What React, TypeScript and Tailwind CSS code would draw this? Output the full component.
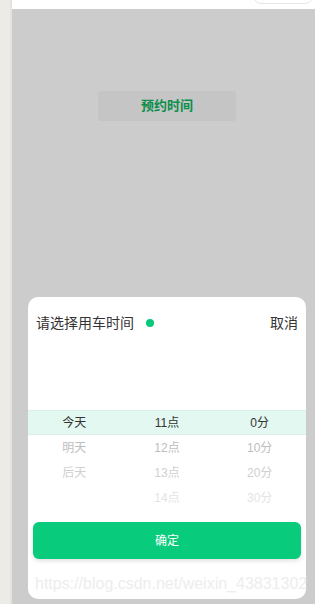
import React from "react";

const cjk = { fontFamily: '"Liberation Sans", "Noto Sans CJK SC", sans-serif' };

const days = ["今天", "明天", "后天", ""];
const hours = ["11点", "12点", "13点", "14点"];
const mins = ["0分", "10分", "20分", "30分"];
const rowColors = ["text-[#333333]", "text-[#bdbdbd]", "text-[#d0d0d0]", "text-[#e4e4e4]"];

export default function App() {
  return (
    <div className="w-[315px] h-[604px] flex overflow-hidden bg-[#cccccc]" style={cjk}>
      <div className="w-[12px] h-full bg-[#ecebe7] border-r-[2px] border-[#e3e2de]" />
      <div className="flex-1 flex flex-col">
        <div className="h-[9px] bg-white relative">
          <div className="absolute left-[241px] top-[-16px] w-[60px] h-[20px] rounded-[8px] border border-[#e6e6e6] bg-white" />
        </div>
        <div className="mt-[82px] ml-[86px] w-[138px] h-[30px] rounded-[3px] bg-[#c5c5c5] flex items-center justify-center">
          <span className="text-[13px] font-bold text-[#0a8f4c]">预约时间</span>
        </div>
        <div className="flex-1" />
        <div className="relative ml-[16px] mb-[5px] w-[278px] h-[302px] bg-white rounded-[10px] flex flex-col">
          <div className="h-[52px] px-[8px] flex items-center justify-between">
            <div className="flex items-center">
              <span className="text-[14px] text-[#333333]">请选择用车时间</span>
              <span className="ml-[12px] w-[8px] h-[8px] rounded-full bg-[#07c97a]" />
            </div>
            <span className="text-[14px] text-[#333333]">取消</span>
          </div>
          <div className="h-[61px]" />
          <div className="flex flex-col">
            {[0, 1, 2, 3].map((i) => (
              <div
                key={i}
                className={
                  "h-[25px] grid grid-cols-3 items-center text-center text-[12px] pt-[1px] " +
                  (i === 0 ? "bg-[#e2f8f0] border-y border-[#d9f0e7] " : "") +
                  rowColors[i]
                }
              >
                <span>{days[i]}</span>
                <span>{hours[i]}</span>
                <span>{mins[i]}</span>
              </div>
            ))}
          </div>
          <div className="mt-[12px] mx-[5px] h-[37px] rounded-[6px] bg-[#08cb7b] shadow-[0_2px_4px_rgba(0,0,0,0.12)] flex items-center justify-center">
            <span className="text-[12px] text-white">确定</span>
          </div>
          <div
            className="absolute left-[7px] top-[279px] text-[16px] leading-[16px] whitespace-nowrap text-[#ededed]"
            style={{ fontFamily: '"Liberation Sans", Arial, sans-serif' }}
          >
            https://blog.csdn.net/weixin_43831302
          </div>
        </div>
      </div>
    </div>
  );
}
